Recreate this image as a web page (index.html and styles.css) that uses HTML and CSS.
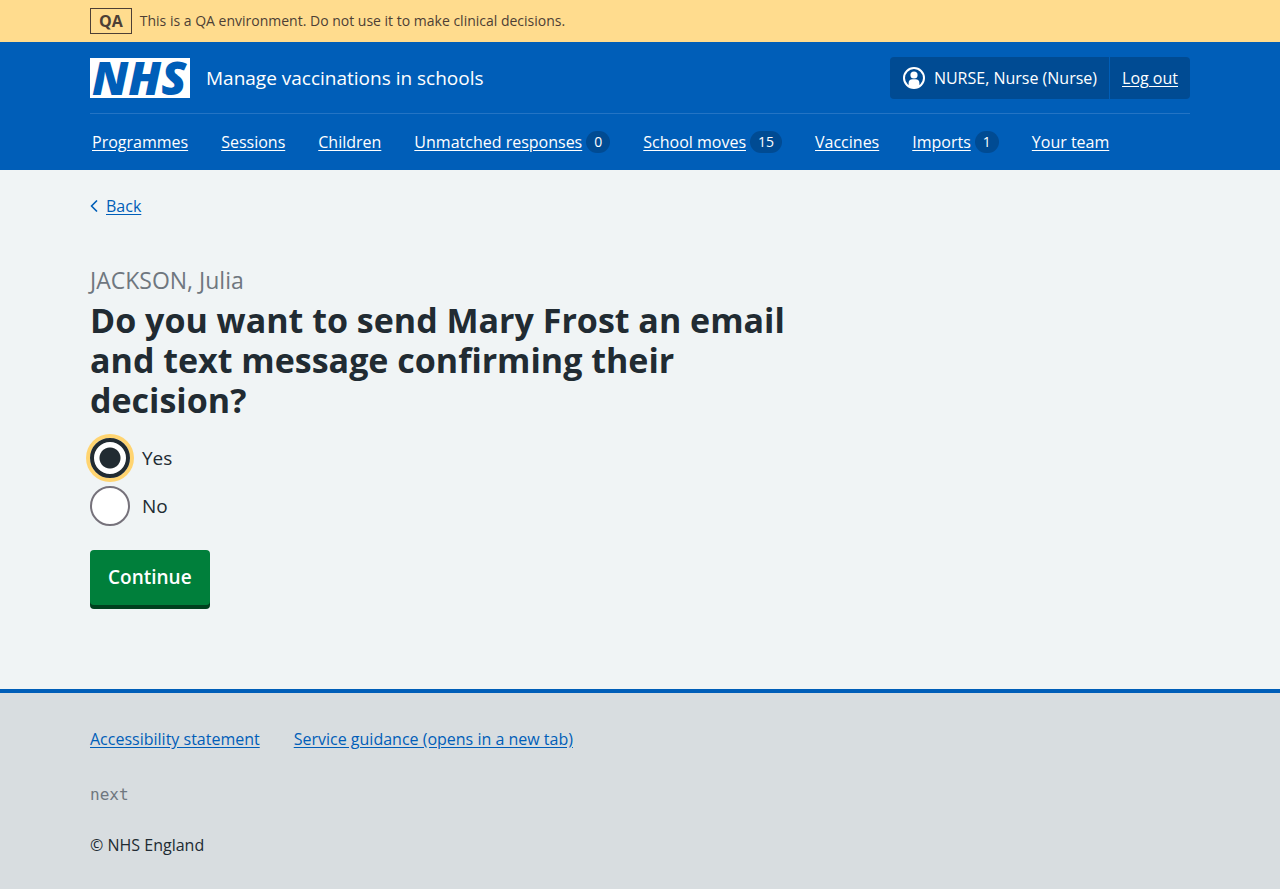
FILE: index.html
```html
<!DOCTYPE html>
<html lang="en">
<head>
<meta charset="utf-8">
<meta name="viewport" content="width=device-width, initial-scale=1">
<title>Send confirmation - Manage vaccinations in schools</title>
<link rel="stylesheet" href="styles.css">
</head>
<body>
<div class="environment">
  <div class="container environment-inner">
    <strong class="environment-tag">QA</strong>
    <span>This is a QA environment. Do not use it to make clinical decisions.</span>
  </div>
</div>
<header class="header">
  <div class="container">
    <div class="header-top">
      <a class="service" href="#">
        <svg class="logo" viewBox="0 0 100 40" role="img" aria-label="NHS">
          <rect width="100" height="40" fill="#fff"/>
          <text class="logo-text" x="2" y="37">NHS</text>
        </svg>
        <span>Manage vaccinations in schools</span>
      </a>
      <div class="account">
        <span class="account-item">
          <svg class="account-icon" viewBox="0 0 24 24" aria-hidden="true">
            <circle cx="12" cy="12" r="10" fill="none" stroke="#fff" stroke-width="2"/>
            <circle cx="12" cy="9" r="3.6" fill="#fff"/>
            <path d="M6.600 20.600v-3.400a4 4 0 0 1 4-4h2.800a4 4 0 0 1 4 4v3.400a10 10 0 0 1-10.800 0z" fill="#fff"/>
          </svg>
          NURSE, Nurse (Nurse)
        </span>
        <a class="account-item" href="#">Log out</a>
      </div>
    </div>
    <nav class="nav" aria-label="Menu">
      <span class="nav-item"><a href="#">Programmes</a></span>
      <span class="nav-item"><a href="#">Sessions</a></span>
      <span class="nav-item"><a href="#">Children</a></span>
      <span class="nav-item"><a href="#">Unmatched responses</a><span class="count">0</span></span>
      <span class="nav-item"><a href="#">School moves</a><span class="count">15</span></span>
      <span class="nav-item"><a href="#">Vaccines</a></span>
      <span class="nav-item"><a href="#">Imports</a><span class="count">1</span></span>
      <span class="nav-item"><a href="#">Your team</a></span>
    </nav>
  </div>
</header>
<main class="container main">
  <div class="back">
    <svg class="back-icon" viewBox="0 0 8 12" aria-hidden="true"><path d="M6.500 1 1.500 6l5 5" fill="none" stroke="#005eb8" stroke-width="1.700" stroke-linecap="round" stroke-linejoin="round"/></svg>
    <a href="#">Back</a>
  </div>
  <form class="form">
    <fieldset class="fieldset">
      <legend class="legend">
        <span class="caption">JACKSON, Julia</span>
        <h1 class="heading">Do you want to send Mary Frost an email and text message confirming their decision?</h1>
      </legend>
      <div class="radios">
        <label class="radio"><input class="radio-input focused" type="radio" name="send" value="yes" checked>Yes</label>
        <label class="radio"><input class="radio-input" type="radio" name="send" value="no">No</label>
      </div>
    </fieldset>
    <button class="button" type="button">Continue</button>
  </form>
</main>
<footer class="footer">
  <div class="container footer-inner">
    <div class="footer-links">
      <a href="#">Accessibility statement</a>
      <a href="#">Service guidance (opens in a new tab)</a>
    </div>
    <code class="version">next</code>
    <p class="copyright">© NHS England</p>
  </div>
</footer>
</body>
</html>
```
FILE: styles.css
```css
* { box-sizing: border-box; }

body {
  margin: 0;
  min-height: 100vh;
  display: flex;
  flex-direction: column;
  background: #f0f4f5;
  color: #212b32;
  font: 400 16px/24px "Open Sans", "Noto Sans", sans-serif;
}

a { color: #005eb8; text-underline-offset: 2px; }

.container {
  width: calc(100% - 64px);
  max-width: 1100px;
  margin: 0 auto;
}

.environment { background: #ffdc8e; color: #4d3f35; font-size: 14px; }
.environment-inner { display: flex; align-items: center; gap: 8px; padding: 8px 0; }
.environment-tag {
  border: 1px solid #4d3f35;
  padding: 0 8px;
  font-size: 16px;
  font-weight: 700;
}

.header { background: #005eb8; color: #fff; }
.header a { color: #fff; }
.header-top {
  display: flex;
  flex-wrap: wrap;
  align-items: center;
  justify-content: space-between;
  padding: 15px 0 14px;
  border-bottom: 1px solid #2474c4;
}
.service {
  display: flex;
  align-items: center;
  gap: 16px;
  font-size: 19px;
  text-decoration: none;
}
.logo { width: 100px; height: 40px; overflow: visible; }
.logo-text { font: italic 800 46px "Open Sans", sans-serif; fill: #005eb8; }

.account { display: flex; background: #004b93; border-radius: 4px; }
.account-item { display: flex; align-items: center; gap: 8px; padding: 9px 12px; }
.account-item + .account-item { border-left: 1px solid #005eb8; }
.account-icon { width: 24px; height: 24px; }

.nav { display: flex; flex-wrap: wrap; gap: 0 33px; padding: 16px 2px; }
.nav-item { display: flex; align-items: center; gap: 4px; }
.count {
  min-width: 24px;
  padding: 0 8px;
  border-radius: 12px;
  background: #004b93;
  font-size: 14px;
  line-height: 22px;
  text-align: center;
}

.main { padding: 24px 0 84px; }
.back { display: flex; align-items: center; gap: 8px; margin-bottom: 46px; }
.back-icon { width: 8px; height: 12px; }

.form { max-width: 733px; }
.fieldset { margin: 0 0 24px; padding: 0; border: 0; }
.legend { padding: 0; margin-bottom: 18px; }
.caption { display: block; color: #6f777f; font-size: 23px; line-height: 32px; }
.heading { max-width: 710px; margin: 4px 0 0; font-size: 34px; line-height: 40px; font-weight: 700; }

.radios { display: flex; flex-direction: column; gap: 8px; }
.radio { display: flex; align-items: center; gap: 12px; font-size: 19px; }
.radio-input {
  appearance: none;
  width: 40px;
  height: 40px;
  margin: 0;
  border: 2px solid #76727b;
  border-radius: 50%;
  background: #fff;
}
.radio-input:checked { background: radial-gradient(circle, #212b32 10px, #fff 11px); }
.radio-input.focused { border: 4px solid #212b32; box-shadow: 0 0 0 4px #ffd470; }

.button {
  padding: 14px 18px;
  border: 0;
  border-radius: 4px;
  background: #007f3b;
  box-shadow: 0 4px 0 #00401e;
  color: #fff;
  font: 600 19px/27px "Open Sans", "Noto Sans", sans-serif;
}

.footer { flex: 1; border-top: 4px solid #005eb8; background: #d8dde0; }
.footer-inner { padding: 34px 0 32px; }
.footer-links { display: flex; flex-wrap: wrap; gap: 8px 34px; margin-bottom: 32px; }
.version { display: block; margin-bottom: 26px; color: #6f777f; font: 16px/24px "DejaVu Sans Mono", monospace; }
.copyright { margin: 0; }
```
